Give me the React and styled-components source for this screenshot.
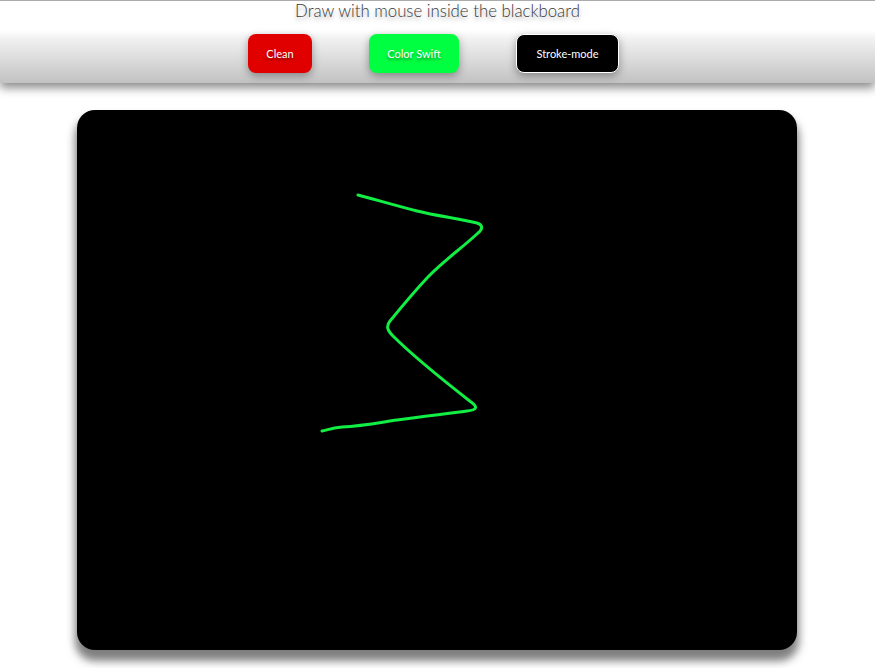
import React from 'react';
import styled, { createGlobalStyle } from 'styled-components';

const GlobalStyle = createGlobalStyle`
  body {
    margin: 0;
    background: #ffffff;
    font-family: "Lato", "Open Sans", sans-serif;
  }
`;

const Page = styled.div`
  width: 875px;
  height: 668px;
  overflow: hidden;
`;

const Header = styled.header`
  position: relative;
  z-index: 1;
  height: 82px;
  border-top: 1px solid #ababab;
  background: linear-gradient(to bottom, #ffffff 0%, #ffffff 36%, #f2f2f2 45%, #c2c2c2 100%);
  box-shadow: 0 5px 9px rgba(0, 0, 0, 0.45);
  display: flex;
  flex-direction: column;
  align-items: center;
`;

const Title = styled.h1`
  margin: 0;
  height: 33px;
  line-height: 20px;
  font-size: 16.8px;
  font-weight: 300;
  color: #3a3a3a;
  text-shadow: 0 3px 4px rgba(0, 0, 0, 0.35);
`;

const ButtonRow = styled.div`
  display: flex;
  gap: 57px;
  margin-left: -8px;
`;

const Button = styled.button`
  height: 39px;
  width: ${p => p.w}px;
  border-radius: 8px;
  border: ${p => (p.outlined ? '1px solid #ffffff' : 'none')};
  background: ${p => p.bg};
  color: #ffffff;
  font-family: "Lato", "Open Sans", sans-serif;
  font-size: 11px;
  font-weight: 400;
  text-shadow: 0 2px 3px rgba(0, 0, 0, 0.45);
  box-shadow: 0 3px 8px rgba(0, 0, 0, 0.35);
  cursor: pointer;
  padding: 0;
`;

const Board = styled.div`
  margin: 27px 0 0 77px;
  width: 720px;
  height: 540px;
  background: #000000;
  border-radius: 18px;
  box-shadow: 0 9px 8px 2px rgba(0, 0, 0, 0.5);
`;

const Sketch = styled.svg`
  display: block;
`;

export default function App() {
  return (
    <Page>
      <GlobalStyle />
      <Header>
        <Title>Draw with mouse inside the blackboard</Title>
        <ButtonRow>
          <Button bg="#e10000" w={64}>Clean</Button>
          <Button bg="#00ff40" w={90}>Color Swift</Button>
          <Button bg="#000000" w={103} outlined>Stroke-mode</Button>
        </ButtonRow>
      </Header>
      <Board>
        <Sketch width="720" height="540" viewBox="0 0 720 540">
          <path
            d="M281 85 C300 90 320 96 340 101 C360 106 385 109 400 113 C406 115 406 119 401 123 C385 138 365 152 350 168 C336 183 322 200 313 211 C309 216 310 220 316 226 C335 245 362 267 394 292 C401 297 400 300 390 301 C370 304 345 306 320 310 C300 313 285 316 265 317 C255 318 250 320 245 321"
            fill="none"
            stroke="#11ee44"
            strokeWidth="3"
            strokeLinecap="round"
            strokeLinejoin="round"
          />
        </Sketch>
      </Board>
    </Page>
  );
}
